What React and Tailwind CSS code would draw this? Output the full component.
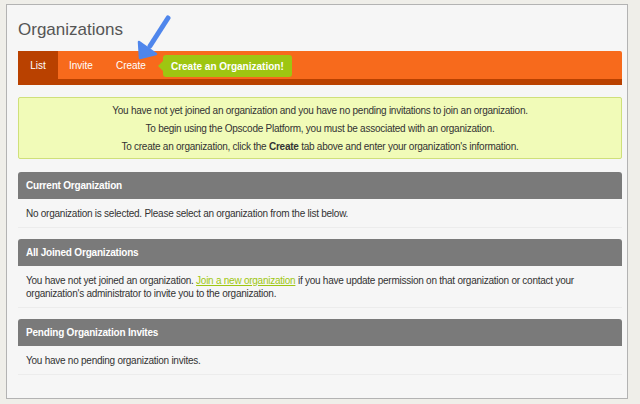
import React from "react";

const font = { fontFamily: '"Liberation Sans", Arial, sans-serif' };

function Section({ title, first, children }) {
  return (
    <div className={first ? "mt-[13px]" : "mt-[11px]"}>
      <div className="h-[27px] rounded-t-[3px] bg-[#7a7a7a] pl-[8px] flex items-center text-[10px] tracking-[-0.2px] font-bold text-white">
        {title}
      </div>
      <div className="border-b border-[#ececec] px-[8px] pt-[8px] pb-[7px] text-[10px] tracking-[-0.25px] leading-[13px] text-[#333]">
        {children}
      </div>
    </div>
  );
}

function BlueArrow() {
  return (
    <svg
      className="absolute left-[128px] top-[8px]"
      width="40"
      height="50"
      viewBox="0 0 40 50"
    >
      <path
        d="M33 5 L15 33"
        stroke="#4f86ec"
        strokeWidth="5"
        strokeLinecap="round"
        fill="none"
      />
      <path d="M5 45 L4 29 L21 41 Z" fill="#4f86ec" stroke="#4f86ec" strokeWidth="2.5" strokeLinejoin="round" />
    </svg>
  );
}

export default function App() {
  return (
    <div className="w-[640px] h-[404px] bg-[#efeee9] pt-[4px] pl-[6px]" style={font}>
      <div className="relative w-[622px] h-[395px] border border-[#b3b3b3] bg-[#f6f6f6] pl-[11px] pr-[5px]">
        <h1 className="pt-[13px] h-[46px] text-[17px] leading-[24px] text-[#555]">Organizations</h1>

        <div className="relative h-[34px] rounded-t-[2px] bg-[#f76a1c] border-b-[6px] border-[#b94100] flex items-stretch text-[10px] text-white">
          <div className="w-[40px] bg-[#b94100] flex items-center justify-center">List</div>
          <div className="pl-[11px] flex items-center">Invite</div>
          <div className="pl-[23px] flex items-center">Create</div>
          <div className="ml-[17px] mt-[4px] h-[22px] relative flex items-center rounded-[3px] bg-[#9ec611] px-[8px] font-bold">
            <span className="absolute left-[-5px] top-[6px] w-0 h-0 border-y-[5px] border-y-transparent border-r-[5px] border-r-[#9ec611]" />
            Create an Organization!
          </div>
        </div>

        <div className="mt-[12px] h-[62px] rounded-[2px] border border-[#cfe07a] bg-[#f1fbb8] flex flex-col items-center justify-center gap-[5px] text-[10px] tracking-[-0.25px] leading-[13px] text-[#333]">
          <p>You have not yet joined an organization and you have no pending invitations to join an organization.</p>
          <p>To begin using the Opscode Platform, you must be associated with an organization.</p>
          <p>
            To create an organization, click the <b>Create</b> tab above and enter your organization's information.
          </p>
        </div>

        <Section first title="Current Organization">
          No organization is selected. Please select an organization from the list below.
        </Section>

        <Section title="All Joined Organizations">
          You have not yet joined an organization.{" "}
          <a className="text-[#9ec611] underline">Join a new organization</a> if you have update permission on that
          organization or contact your organization's administrator to invite you to the organization.
        </Section>

        <Section title="Pending Organization Invites">You have no pending organization invites.</Section>

        <BlueArrow />
      </div>
    </div>
  );
}
